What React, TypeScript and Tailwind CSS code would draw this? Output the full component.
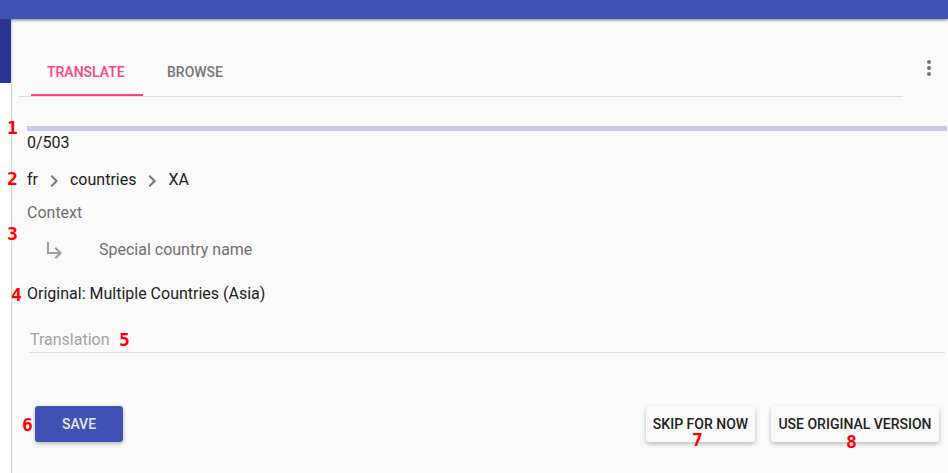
import { useState } from "react";
import type { ReactNode } from "react";
import { MdChevronRight, MdMoreVert, MdSubdirectoryArrowRight } from "react-icons/md";

function Marker({ children, className }: { children: ReactNode; className: string }) {
  return (
    <span
      className={`pointer-events-none absolute font-['DejaVu_Sans_Mono',monospace] text-lg leading-4 font-bold text-[#ff0000] ${className}`}
    >
      {children}
    </span>
  );
}

const raised = "h-9 rounded-[3px] text-sm leading-4 font-medium shadow-[0_2px_4px_0_rgba(0,0,0,0.26)]";

export default function App() {
  const [tab, setTab] = useState("TRANSLATE");
  const [translation, setTranslation] = useState("");

  return (
    <div className="flex min-h-screen flex-col bg-white font-[Roboto,sans-serif] text-base leading-6 text-[#212121]">
      <header className="relative z-10 h-[19px] bg-[#3f51b5] shadow-[0_1px_3px_rgba(0,0,0,0.5)]" />
      <div className="flex flex-1">
        <aside className="relative z-20 h-16 w-[11px] shrink-0 bg-[#283593]" />
        <main className="min-w-0 flex-1 bg-[#fafafa] pt-[29px] shadow-[inset_1px_0_0_#dadada,inset_2px_0_0_#f0f0f0]">
          <div className="flex pl-2">
            <div role="tablist" className="flex h-[49px] flex-1 gap-2 border-b border-[#dcdcdc] pl-3">
              {["TRANSLATE", "BROWSE"].map((name) => (
                <button
                  key={name}
                  type="button"
                  role="tab"
                  aria-selected={tab === name}
                  onClick={() => setTab(name)}
                  className={`h-12 border-b-2 px-4 pt-0.5 text-left text-sm font-medium first:w-28 ${
                    tab === name ? "border-[#ff4081] text-[#ff4081]" : "border-transparent text-[#757575]"
                  }`}
                >
                  {name}
                </button>
              ))}
            </div>
            <button type="button" aria-label="More options" className="ml-3.5 mr-[7px] mt-2 h-6 w-6 text-[#757575]">
              <MdMoreVert size={24} />
            </button>
          </div>

          <section className="pl-4 pt-[29px]">
            <div className="relative mr-px">
              <div role="progressbar" aria-label="Translated" aria-valuemin={0} aria-valuenow={0} aria-valuemax={503} className="h-[5px] bg-[#c5cae9]" />
              <p>0/503</p>
              <Marker className="-left-5 -top-1.5">1</Marker>
            </div>

            <nav aria-label="Breadcrumb" className="relative mt-[13px] flex h-6 items-center gap-1">
              <span>fr</span>
              <MdChevronRight size={24} className="mt-0.5 text-[#757575]" />
              <span>countries</span>
              <MdChevronRight size={24} className="mt-0.5 text-[#757575]" />
              <span>XA</span>
              <Marker className="-left-5 top-[3px]">2</Marker>
            </nav>

            <div className="relative mt-[9px] text-[#6f6f6f]">
              <h2>Context</h2>
              <div className="mt-[13px] flex items-center pl-4">
                <MdSubdirectoryArrowRight size={24} className="text-[#9e9e9e]" />
                <p className="pl-8">Special country name</p>
              </div>
              <Marker className="-left-5 top-[25px]">3</Marker>
            </div>

            <p className="relative mt-5">
              Original: Multiple Countries (Asia)
              <Marker className="-left-4 top-[5px]">4</Marker>
            </p>

            <div className="relative ml-0.5 mr-[3px] mt-[21px]">
              <input
                aria-label="Translation"
                placeholder="Translation"
                value={translation}
                onChange={(e) => setTranslation(e.target.value)}
                className="block h-[26px] w-full border-b border-[#dcdcdc] bg-transparent px-px outline-none placeholder:text-[#a3a3a3]"
              />
              <Marker className="left-[90px] top-[5px]">5</Marker>
            </div>

            <div className="mt-[53px] flex gap-4 pb-7 pl-2 pr-[9px]">
              <div className="relative mr-auto">
                <button type="button" className={`${raised} w-[88px] bg-[#3f51b5] text-[#e8eaf6]`}>
                  SAVE
                </button>
                <Marker className="-left-[13px] top-[11px]">6</Marker>
              </div>
              <div className="relative">
                <button type="button" className={`${raised} w-[109px] bg-[#fafafa]`}>
                  SKIP FOR NOW
                </button>
                <Marker className="left-[46px] top-[26px]">7</Marker>
              </div>
              <div className="relative">
                <button type="button" className={`${raised} w-[168px] bg-[#fafafa]`}>
                  USE ORIGINAL VERSION
                </button>
                <Marker className="left-[75px] top-7">8</Marker>
              </div>
            </div>
          </section>
        </main>
      </div>
    </div>
  );
}
